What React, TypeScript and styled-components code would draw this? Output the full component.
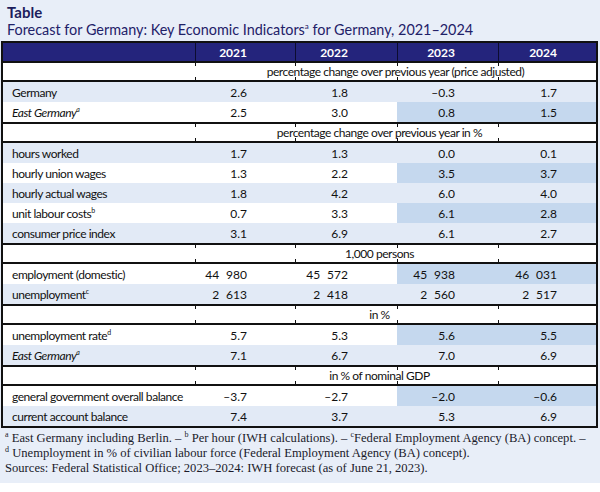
import styled, { createGlobalStyle } from 'styled-components';

const Global = createGlobalStyle`
  html, body {
    margin: 0;
    padding: 0;
    background: #ffffff;
  }
`;

const Page = styled.div`
  width: 600px;
  background: #e8eef8;
  padding-bottom: 7px;
  font-family: Lato, "Liberation Sans", sans-serif;
  color: #111;
`;

const Title = styled.div`
  padding: 3px 0 0 7px;
  font-size: 15px;
  line-height: 18px;
  font-weight: 700;
  color: #1c1d5c;
`;

const Subtitle = styled.div`
  padding-left: 7px;
  font-size: 14.4px;
  line-height: 17px;
  color: #1f2168;
  margin-bottom: 3px;

  sup {
    font-size: 8px;
    line-height: 0;
    vertical-align: 6px;
  }
`;

const Sheet = styled.table`
  margin-left: 1px;
  width: 597px;
  table-layout: fixed;
  border-collapse: separate;
  border-spacing: 0;
  border: 2px solid #111;
  background: #fff;
  font-size: 12px;
  letter-spacing: -0.45px;
`;

const HeadCell = styled.th<{ $pad?: number }>`
  height: 18px;
  padding: 0 ${p => p.$pad ?? 0}px 0 0;
  background: #24247c;
  color: #fff;
  font-weight: 700;
  text-align: right;
  letter-spacing: 0;
  box-shadow: inset 1px 0 0 #0c0c30;

  &:first-child {
    box-shadow: none;
  }
`;

const GroupCell = styled.td<{ $shift?: number }>`
  height: 17px;
  padding: 0 ${p => p.$shift ?? 0}px 0 0;
  border-top: 2px solid #111;
  border-bottom: 2px solid #111;
  text-align: center;
  background-color: #fff;
  background-image:
    linear-gradient(#111, #111), linear-gradient(#111, #111),
    linear-gradient(#111, #111), linear-gradient(#111, #111),
    linear-gradient(#111, #111), linear-gradient(#111, #111),
    linear-gradient(#111, #111), linear-gradient(#111, #111);
  background-size: 1px 3px;
  background-repeat: no-repeat;
  background-position:
    0 0, 0 100%, 100px 0, 100px 100%,
    202px 0, 202px 100%, 303px 0, 303px 100%;
`;

const GroupLead = styled.td`
  border-top: 2px solid #111;
  border-bottom: 2px solid #111;
  background: #fff;
`;

const Row = styled.tr<{ $light?: boolean }>`
  height: 20px;
  background: ${p => (p.$light ? '#e2eaf6' : '#ffffff')};
`;

const LabelCell = styled.td<{ $italic?: boolean }>`
  padding: 0 0 0 9px;
  white-space: nowrap;
  font-style: ${p => (p.$italic ? 'italic' : 'normal')};

  sup {
    font-size: 7px;
    line-height: 0;
    vertical-align: 5px;
  }
`;

const ValueCell = styled.td<{ $pad: number; $hl?: boolean }>`
  padding: 0 ${p => p.$pad}px 0 0;
  text-align: right;
  white-space: pre;
  letter-spacing: 0;
  background: ${p => (p.$hl ? '#c5d8ee' : 'transparent')};
`;

const Notes = styled.div`
  padding: 3px 0 0 5px;
  font-family: "Liberation Serif", serif;
  font-size: 12.6px;
  line-height: 15px;
  color: #1a1a2a;
`;

const NoteLine = styled.div`
  white-space: nowrap;

  sup {
    font-size: 8px;
    line-height: 0;
    vertical-align: 5px;
  }
`;

const pads = [48, 49, 43, 39];
const years = ['2021', '2022', '2023', '2024'];

type Line = {
  name: string;
  sup?: string;
  italic?: boolean;
  light?: boolean;
  v: string[];
};

type Group = { title: string; shift: number; rows: Line[] };

const groups: Group[] = [
  {
    title: 'percentage change over previous year (price adjusted)',
    shift: 0,
    rows: [
      { name: 'Germany', light: true, v: ['2.6', '1.8', '–0.3', '1.7'] },
      { name: 'East Germany', sup: 'a', italic: true, v: ['2.5', '3.0', '0.8', '1.5'] },
    ],
  },
  {
    title: 'percentage change over previous year in %',
    shift: 32,
    rows: [
      { name: 'hours worked', light: true, v: ['1.7', '1.3', '0.0', '0.1'] },
      { name: 'hourly union wages', v: ['1.3', '2.2', '3.5', '3.7'] },
      { name: 'hourly actual wages', light: true, v: ['1.8', '4.2', '6.0', '4.0'] },
      { name: 'unit labour costs', sup: 'b', v: ['0.7', '3.3', '6.1', '2.8'] },
      { name: 'consumer price index', light: true, v: ['3.1', '6.9', '6.1', '2.7'] },
    ],
  },
  {
    title: '1,000 persons',
    shift: 32,
    rows: [
      { name: 'employment (domestic)', v: ['44\u2007980', '45\u2007572', '45\u2007938', '46\u2007031'] },
      { name: 'unemployment', sup: 'c', light: true, v: ['2\u2007613', '2\u2007418', '2\u2007560', '2\u2007517'] },
    ],
  },
  {
    title: 'in %',
    shift: 32,
    rows: [
      { name: 'unemployment rate', sup: 'd', v: ['5.7', '5.3', '5.6', '5.5'] },
      { name: 'East Germany', sup: 'a', italic: true, light: true, v: ['7.1', '6.7', '7.0', '6.9'] },
    ],
  },
  {
    title: 'in % of nominal GDP',
    shift: 32,
    rows: [
      { name: 'general government overall balance', v: ['–3.7', '–2.7', '–2.0', '–0.6'] },
      { name: 'current account balance', light: true, v: ['7.4', '3.7', '5.3', '6.9'] },
    ],
  },
];

const App = () => {
  return (
    <Page>
      <Global />
      <Title>Table</Title>
      <Subtitle>
        Forecast for Germany: Key Economic Indicators<sup>a</sup> for Germany, 2021–2024
      </Subtitle>
      <Sheet>
        <colgroup>
          <col style={{ width: 192 }} />
          <col style={{ width: 100 }} />
          <col style={{ width: 102 }} />
          <col style={{ width: 101 }} />
          <col style={{ width: 98 }} />
        </colgroup>
        <thead>
          <tr>
            <HeadCell />
            {years.map((y, i) => (
              <HeadCell key={y} $pad={pads[i]}>{y}</HeadCell>
            ))}
          </tr>
        </thead>
        <tbody>
          {groups.map(g => [
            <tr key={g.title}>
              <GroupLead />
              <GroupCell colSpan={4} $shift={g.shift}>{g.title}</GroupCell>
            </tr>,
            ...g.rows.map(r => (
              <Row key={g.title + r.name} $light={r.light}>
                <LabelCell $italic={r.italic}>
                  {r.name}
                  {r.sup && <sup>{r.sup}</sup>}
                </LabelCell>
                {r.v.map((v, i) => (
                  <ValueCell key={i} $pad={pads[i]} $hl={!r.light && i >= 2}>
                    {v}
                  </ValueCell>
                ))}
              </Row>
            )),
          ])}
        </tbody>
      </Sheet>
      <Notes>
        <NoteLine>
          <sup>a</sup> East Germany including Berlin. – <sup>b</sup> Per hour (IWH calculations). – <sup>c</sup>Federal Employment Agency (BA) concept. –
        </NoteLine>
        <NoteLine>
          <sup>d</sup> Unemployment in % of civilian labour force (Federal Employment Agency (BA) concept).
        </NoteLine>
        <NoteLine>Sources: Federal Statistical Office; 2023–2024: IWH forecast (as of June 21, 2023).</NoteLine>
      </Notes>
    </Page>
  );
};

export default App;
